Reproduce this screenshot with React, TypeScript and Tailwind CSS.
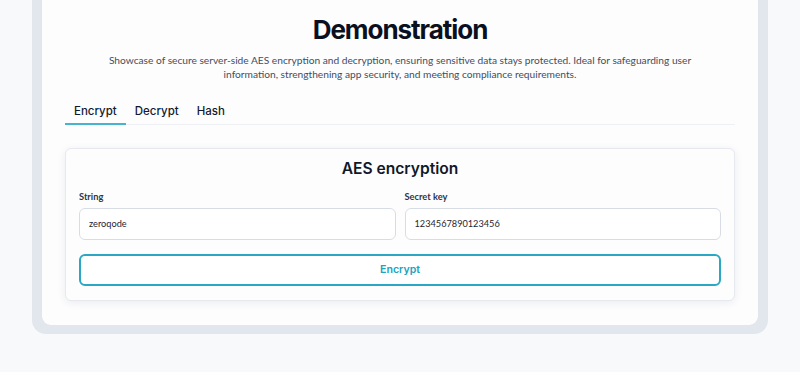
export default function App() {
  return (
    <div className="min-h-[372px] w-full bg-[#f8f9fb] px-8 font-['Lato',sans-serif]">
      <div className="rounded-b-[14px] bg-[#e2e7ed] px-[10px] pb-[9px]">
        <div className="rounded-b-[9px] bg-[#fdfdfe] px-[23px] pb-[24px] pt-[12px]">
          <h1 className="text-center font-['Inter',sans-serif] text-[26px] font-bold leading-[36px] tracking-[-0.04em] text-[#0b1021]">
            Demonstration
          </h1>
          <p className="mx-auto mt-[5px] max-w-[600px] text-center text-[10.2px] leading-[14px] text-[#434d5f]">
            Showcase of secure server-side AES encryption and decryption, ensuring sensitive data stays protected. Ideal for safeguarding user information, strengthening app security, and meeting compliance requirements.
          </p>

          <div className="mt-[18px] flex border-b border-[#eef0f3] font-['Inter',sans-serif] text-[11.5px] font-medium leading-[16px] text-[#141a2e]">
            <button className="-mb-px border-b-2 border-[#46b4cf] px-[9px] pb-[4px] pt-[4px]">Encrypt</button>
            <button className="-mb-px border-b-2 border-transparent px-[9px] pb-[4px] pt-[4px]">Decrypt</button>
            <button className="-mb-px border-b-2 border-transparent px-[9px] pb-[4px] pt-[4px]">Hash</button>
          </div>

          <div className="mt-[23px] rounded-md border border-[#e6e9ee] bg-[#fdfdfe] px-[13px] pb-[14px] pt-[9px] shadow-[0_2px_8px_rgba(30,41,59,0.08)]">
            <h2 className="text-center font-['Inter',sans-serif] text-[15.6px] font-semibold leading-[22px] text-[#111827]">
              AES encryption
            </h2>
            <div className="mt-[11px] grid grid-cols-2 gap-[9px]">
              <div>
                <label className="block text-[9.3px] font-bold leading-[12px] text-[#2d3548]">String</label>
                <div className="mt-[5px] flex h-[32px] items-center rounded-md border border-[#d8dde5] bg-white px-[9px] text-[9.2px] text-[#1f2430]">
                  zeroqode
                </div>
              </div>
              <div>
                <label className="block text-[9.3px] font-bold leading-[12px] text-[#2d3548]">Secret key</label>
                <div className="mt-[5px] flex h-[32px] items-center rounded-md border border-[#d8dde5] bg-white px-[9px] text-[9.2px] text-[#1f2430]">
                  1234567890123456
                </div>
              </div>
            </div>
            <button className="mt-[14px] flex h-[32px] w-full items-center justify-center rounded-md border-2 border-[#2aa7c4] bg-white font-['Inter',sans-serif] text-[10.6px] font-semibold text-[#20a3c2]">
              Encrypt
            </button>
          </div>
        </div>
      </div>
    </div>
  );
}
